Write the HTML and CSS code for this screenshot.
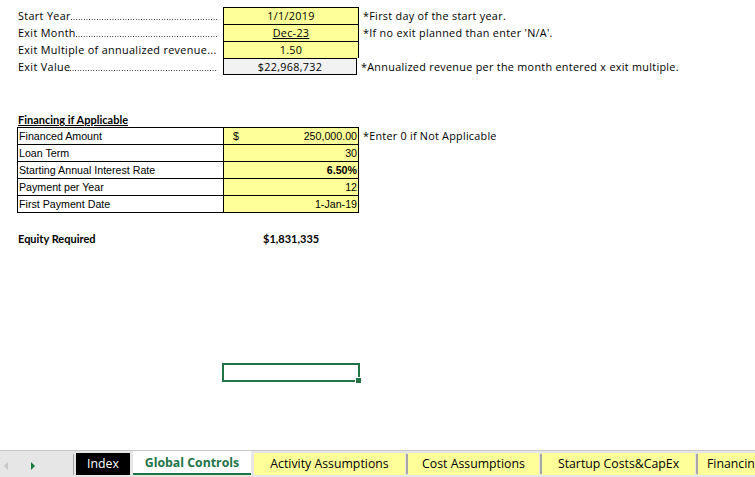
FILE: index.html
```html
<!DOCTYPE html>
<html>
<head>
<meta charset="utf-8">
<link rel="stylesheet" href="styles.css">
</head>
<body>
<div class="sheet">
  <div class="top">
    <div class="row">
      <div class="lbl"><span>Start Year</span><span class="dots"></span></div>
      <div class="val yellow">1/1/2019</div>
      <div class="note">*First day of the start year.</div>
    </div>
    <div class="row">
      <div class="lbl"><span>Exit Month</span><span class="dots"></span></div>
      <div class="val yellow"><u>Dec-23</u></div>
      <div class="note">*If no exit planned than enter 'N/A'.</div>
    </div>
    <div class="row">
      <div class="lbl"><span>Exit Multiple of annualized revenue...</span></div>
      <div class="val yellow">1.50</div>
      <div class="note"></div>
    </div>
    <div class="row last">
      <div class="lbl"><span>Exit Value</span><span class="dots"></span></div>
      <div class="val gray">$22,968,732</div>
      <div class="note">*Annualized revenue per the month entered x exit multiple.</div>
    </div>
  </div>

  <div class="fin-title">Financing if Applicable</div>
  <div class="fin">
    <div class="frow">
      <div class="fl">Financed Amount</div>
      <div class="fv"><span>$</span><span>250,000.00</span></div>
      <div class="fnote">*Enter 0 if Not Applicable</div>
    </div>
    <div class="frow">
      <div class="fl">Loan Term</div>
      <div class="fv"><span></span><span>30</span></div>
      <div class="fnote"></div>
    </div>
    <div class="frow">
      <div class="fl">Starting Annual Interest Rate</div>
      <div class="fv"><span></span><span class="b">6.50%</span></div>
      <div class="fnote"></div>
    </div>
    <div class="frow">
      <div class="fl">Payment per Year</div>
      <div class="fv"><span></span><span>12</span></div>
      <div class="fnote"></div>
    </div>
    <div class="frow flast">
      <div class="fl">First Payment Date</div>
      <div class="fv"><span></span><span>1-Jan-19</span></div>
      <div class="fnote"></div>
    </div>
  </div>

  <div class="equity">
    <div class="eq-l">Equity Required</div>
    <div class="eq-v">$1,831,335</div>
  </div>

  <div class="selrow">
    <div class="sel"><span class="handle"></span></div>
  </div>
</div>

<div class="tabbar">
  <div class="nav">
    <span class="arr left"></span>
    <span class="arr right"></span>
  </div>
  <div class="tabs">
    <div class="tab black w-index">Index</div>
    <div class="tab active w-global">Global Controls</div>
    <div class="tab yel w-act">Activity Assumptions</div>
    <div class="tab yel w-cost">Cost Assumptions</div>
    <div class="tab yel w-start">Startup Costs&amp;CapEx</div>
    <div class="tab yel w-fin">Financing</div>
  </div>
</div>
</body>
</html>
```

FILE: styles.css
```css
html, body {
  margin: 0;
  padding: 0;
  background: #fff;
}
body {
  width: 755px;
  height: 477px;
  overflow: hidden;
  display: flex;
  flex-direction: column;
  font-family: "Open Sans", "Liberation Sans", sans-serif;
  color: #000;
}
.sheet {
  height: 450px;
  padding-top: 7px;
  box-sizing: border-box;
}
.top {
  display: flex;
  flex-direction: column;
}
.row {
  display: flex;
  height: 17px;
}
.lbl {
  width: 200px;
  margin-left: 18px;
  margin-right: 5px;
  display: flex;
  align-items: baseline;
  white-space: nowrap;
  font-size: 10.8px;
  line-height: 17px;
  letter-spacing: 0.35px;
}
.dots {
  flex: 1;
  height: 1px;
  align-self: flex-end;
  margin-bottom: 4px;
  background-image: linear-gradient(to right, #222 1px, transparent 1px);
  background-size: 2.6px 1px;
  background-repeat: repeat-x;
}
.val {
  width: 134px;
  border: 1px solid #000;
  border-bottom: none;
  text-align: center;
  font-size: 10.8px;
  letter-spacing: 0.3px;
  line-height: 16px;
}
.row.last .val {
  border-bottom: 1px solid #000;
  height: 17px;
  box-sizing: border-box;
  line-height: 15px;
}
.yellow { background: #ffff99; }
.gray { background: #f2f2f2; }
.note {
  padding-left: 4px;
  font-size: 10.8px;
  letter-spacing: 0.3px;
  line-height: 17px;
  white-space: nowrap;
}
.fin-title {
  margin-top: 37px;
  margin-left: 18px;
  font-family: "Lato", sans-serif;
  font-weight: bold;
  font-size: 11px;
  text-decoration: underline;
  line-height: 15px;
  height: 15px;
}
.fin {
  margin-left: 17px;
  display: flex;
  flex-direction: column;
  font-family: "Liberation Sans", Arial, sans-serif;
  font-size: 10.67px;
}
.frow {
  display: flex;
  height: 17px;
}
.fl {
  width: 206px;
  border: 1px solid #000;
  border-bottom: none;
  border-right: none;
  padding-left: 1px;
  line-height: 16px;
  box-sizing: border-box;
}
.fv {
  width: 136px;
  border: 1px solid #000;
  border-bottom: none;
  background: #ffff99;
  display: flex;
  justify-content: space-between;
  padding: 0 1px 0 9px;
  line-height: 16px;
  box-sizing: border-box;
}
.frow.flast { height: 18px; }
.frow.flast .fl, .frow.flast .fv { border-bottom: 1px solid #000; }
.fv .b { font-weight: bold; }
.fnote {
  padding-left: 4px;
  font-family: "Open Sans", sans-serif;
  font-size: 10.8px;
  letter-spacing: 0.25px;
  line-height: 17px;
  white-space: nowrap;
}
.equity {
  display: flex;
  margin-top: 18px;
  font-family: "Lato", sans-serif;
  font-weight: bold;
  font-size: 11px;
  line-height: 15px;
}
.eq-l {
  margin-left: 18px;
  width: 245px;
}
.selrow {
  margin-top: 117px;
  padding-left: 222px;
}
.sel {
  position: relative;
  width: 138px;
  height: 19px;
  border: 2px solid #217346;
  box-sizing: border-box;
}
.handle {
  position: absolute;
  right: -4px;
  bottom: -4px;
  width: 5px;
  height: 5px;
  background: #217346;
  border: 1px solid #fff;
}
.tabbar {
  height: 27px;
  display: flex;
  background: #e6e6e6;
  border-top: 1px solid #c6c6c6;
  box-sizing: border-box;
  font-family: "Open Sans", "Liberation Sans", sans-serif;
  font-size: 12.3px;
}
.nav {
  width: 74px;
  flex: none;
  position: relative;
  border-right: 1px solid #a6a6a6;
  margin: 3px 0 2px 0;
  box-sizing: border-box;
}
.arr {
  position: absolute;
  top: 8px;
  width: 0;
  height: 0;
  border-top: 4px solid transparent;
  border-bottom: 4px solid transparent;
}
.arr.left {
  left: 4px;
  border-right: 4px solid #c8c8c8;
}
.arr.right {
  left: 31px;
  border-left: 4px solid #1a7a3f;
}
.tabs {
  display: flex;
  padding-left: 2px;
}
.tab {
  flex: none;
  height: 22px;
  line-height: 21px;
  margin-top: 2px;
  margin-right: 3px;
  white-space: nowrap;
  text-align: center;
  box-sizing: border-box;
}
.w-index { width: 54px; }
.w-global { width: 118px; }
.w-act { width: 151px; }
.w-cost { width: 131px; }
.w-start { width: 153px; }
.w-fin { width: 80px; text-align: left; padding-left: 9px; }
.tab.black {
  background: #000;
  color: #fff;
}
.tab.active {
  background: #fff;
  color: #217346;
  font-weight: bold;
  margin-top: 0;
  height: 24px;
  line-height: 23px;
  border-bottom: 2px solid #217346;
}
.tab.yel {
  background: #ffff99;
  position: relative;
}
.tab.yel::after {
  content: "";
  position: absolute;
  right: -3px;
  top: 1px;
  bottom: 1px;
  width: 2px;
  background: #a6a6a6;
}
```
